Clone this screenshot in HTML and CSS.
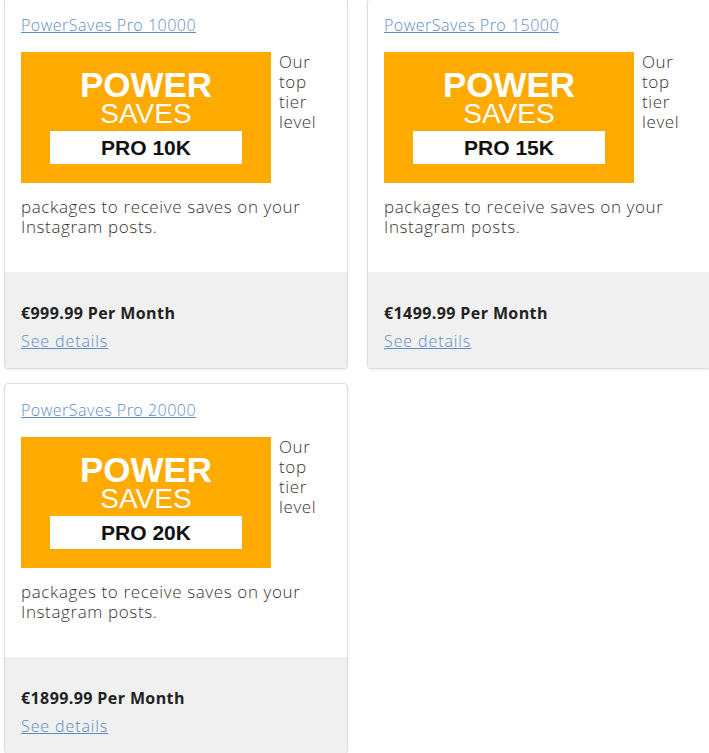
FILE: index.html
```html
<!DOCTYPE html>
<html lang="en">
<head>
    <meta charset="UTF-8">
    <meta name="viewport" content="width=device-width, initial-scale=1.0">
    <title>PowerSaves</title>
    <link rel="stylesheet" href="styles.css">
</head>
<body>
    <section class="productos">
        <div class="producto">
            <div class="cuerpo">
                <a class="titulo" href="#">PowerSaves Pro 10000</a>
                <div class="fila">
                    <div class="banner">
                        <span class="b-marca">POWER
SAVES</span>
                        <span class="b-pro">PRO 10K</span>
                    </div>
                    <p class="lado">Our top tier level</p>
                </div>
                <p class="desc">packages to receive saves on your Instagram posts.</p>
            </div>
            <div class="pie">
                <p class="precio">€999.99 Per Month</p>
                <a class="detalles" href="#">See details</a>
            </div>
        </div>
        <div class="producto">
            <div class="cuerpo">
                <a class="titulo" href="#">PowerSaves Pro 15000</a>
                <div class="fila">
                    <div class="banner">
                        <span class="b-marca">POWER
SAVES</span>
                        <span class="b-pro">PRO 15K</span>
                    </div>
                    <p class="lado">Our top tier level</p>
                </div>
                <p class="desc">packages to receive saves on your Instagram posts.</p>
            </div>
            <div class="pie">
                <p class="precio">€1499.99 Per Month</p>
                <a class="detalles" href="#">See details</a>
            </div>
        </div>
        <div class="producto">
            <div class="cuerpo">
                <a class="titulo" href="#">PowerSaves Pro 20000</a>
                <div class="fila">
                    <div class="banner">
                        <span class="b-marca">POWER
SAVES</span>
                        <span class="b-pro">PRO 20K</span>
                    </div>
                    <p class="lado">Our top tier level</p>
                </div>
                <p class="desc">packages to receive saves on your Instagram posts.</p>
            </div>
            <div class="pie">
                <p class="precio">€1899.99 Per Month</p>
                <a class="detalles" href="#">See details</a>
            </div>
        </div>
    </section>
</body>
</html>
```

FILE: styles.css
```css
body {
    font-family: "Open Sans", Arial, sans-serif;
    margin: 0;
    padding: 0;
    background-color: #fff;
    color: #333;
    overflow: hidden;
}
.productos {
    display: grid;
    grid-template-columns: 344px 344px;
    column-gap: 19px;
    row-gap: 14px;
    margin: -2px 0 0 4px;
}
.producto {
    background-color: #fff;
    border: 1px solid #ddd;
    border-radius: 4px;
    box-shadow: 0 1px 2px rgba(0, 0, 0, 0.08);
    overflow: hidden;
    height: 371px;
    box-sizing: border-box;
    display: flex;
    flex-direction: column;
}
.cuerpo {
    padding: 14px 16px 0 16px;
    flex: 1;
}
.titulo {
    display: block;
    width: max-content;
    margin-bottom: 15px;
    font-size: 16px;
    font-weight: 300;
    line-height: 24px;
    color: #5b8dc9;
    letter-spacing: 0.5px;
}
.fila {
    display: flex;
    gap: 8px;
    align-items: flex-start;
}
.lado,
.desc {
    margin: 0;
    font-size: 17px;
    font-weight: 300;
    line-height: 20px;
    letter-spacing: 0.62px;
}
.lado {
    flex: 1;
    min-width: 0;
}
.desc {
    margin-top: 14px;
}
.banner {
    flex: none;
    width: 250px;
    height: 131px;
    background-color: #ffaa00;
    display: flex;
    flex-direction: column;
    align-items: center;
    color: #fff;
    font-family: "Liberation Sans", Arial, sans-serif;
}
.b-marca {
    display: block;
    margin-top: 17px;
    white-space: pre-line;
    text-align: center;
    font-size: 28px;
    line-height: 25px;
}
.b-marca::first-line {
    font-size: 35px;
    font-weight: bold;
    line-height: 32px;
}
.b-pro {
    background-color: #fff;
    color: #111;
    width: 192px;
    height: 33px;
    margin-top: 5px;
    font-size: 21px;
    font-weight: bold;
    line-height: 33px;
    text-align: center;
}
.pie {
    background-color: #f0f0f0;
    height: 96px;
    padding: 29px 16px 0 16px;
    box-sizing: border-box;
}
.precio {
    margin: 0;
    font-size: 16px;
    font-weight: bold;
    line-height: 24px;
    color: #222;
    letter-spacing: 0.4px;
}
.detalles {
    display: inline-block;
    margin-top: 4px;
    font-size: 16px;
    font-weight: 300;
    line-height: 24px;
    color: #5b8dc9;
    letter-spacing: 0.9px;
}
```
